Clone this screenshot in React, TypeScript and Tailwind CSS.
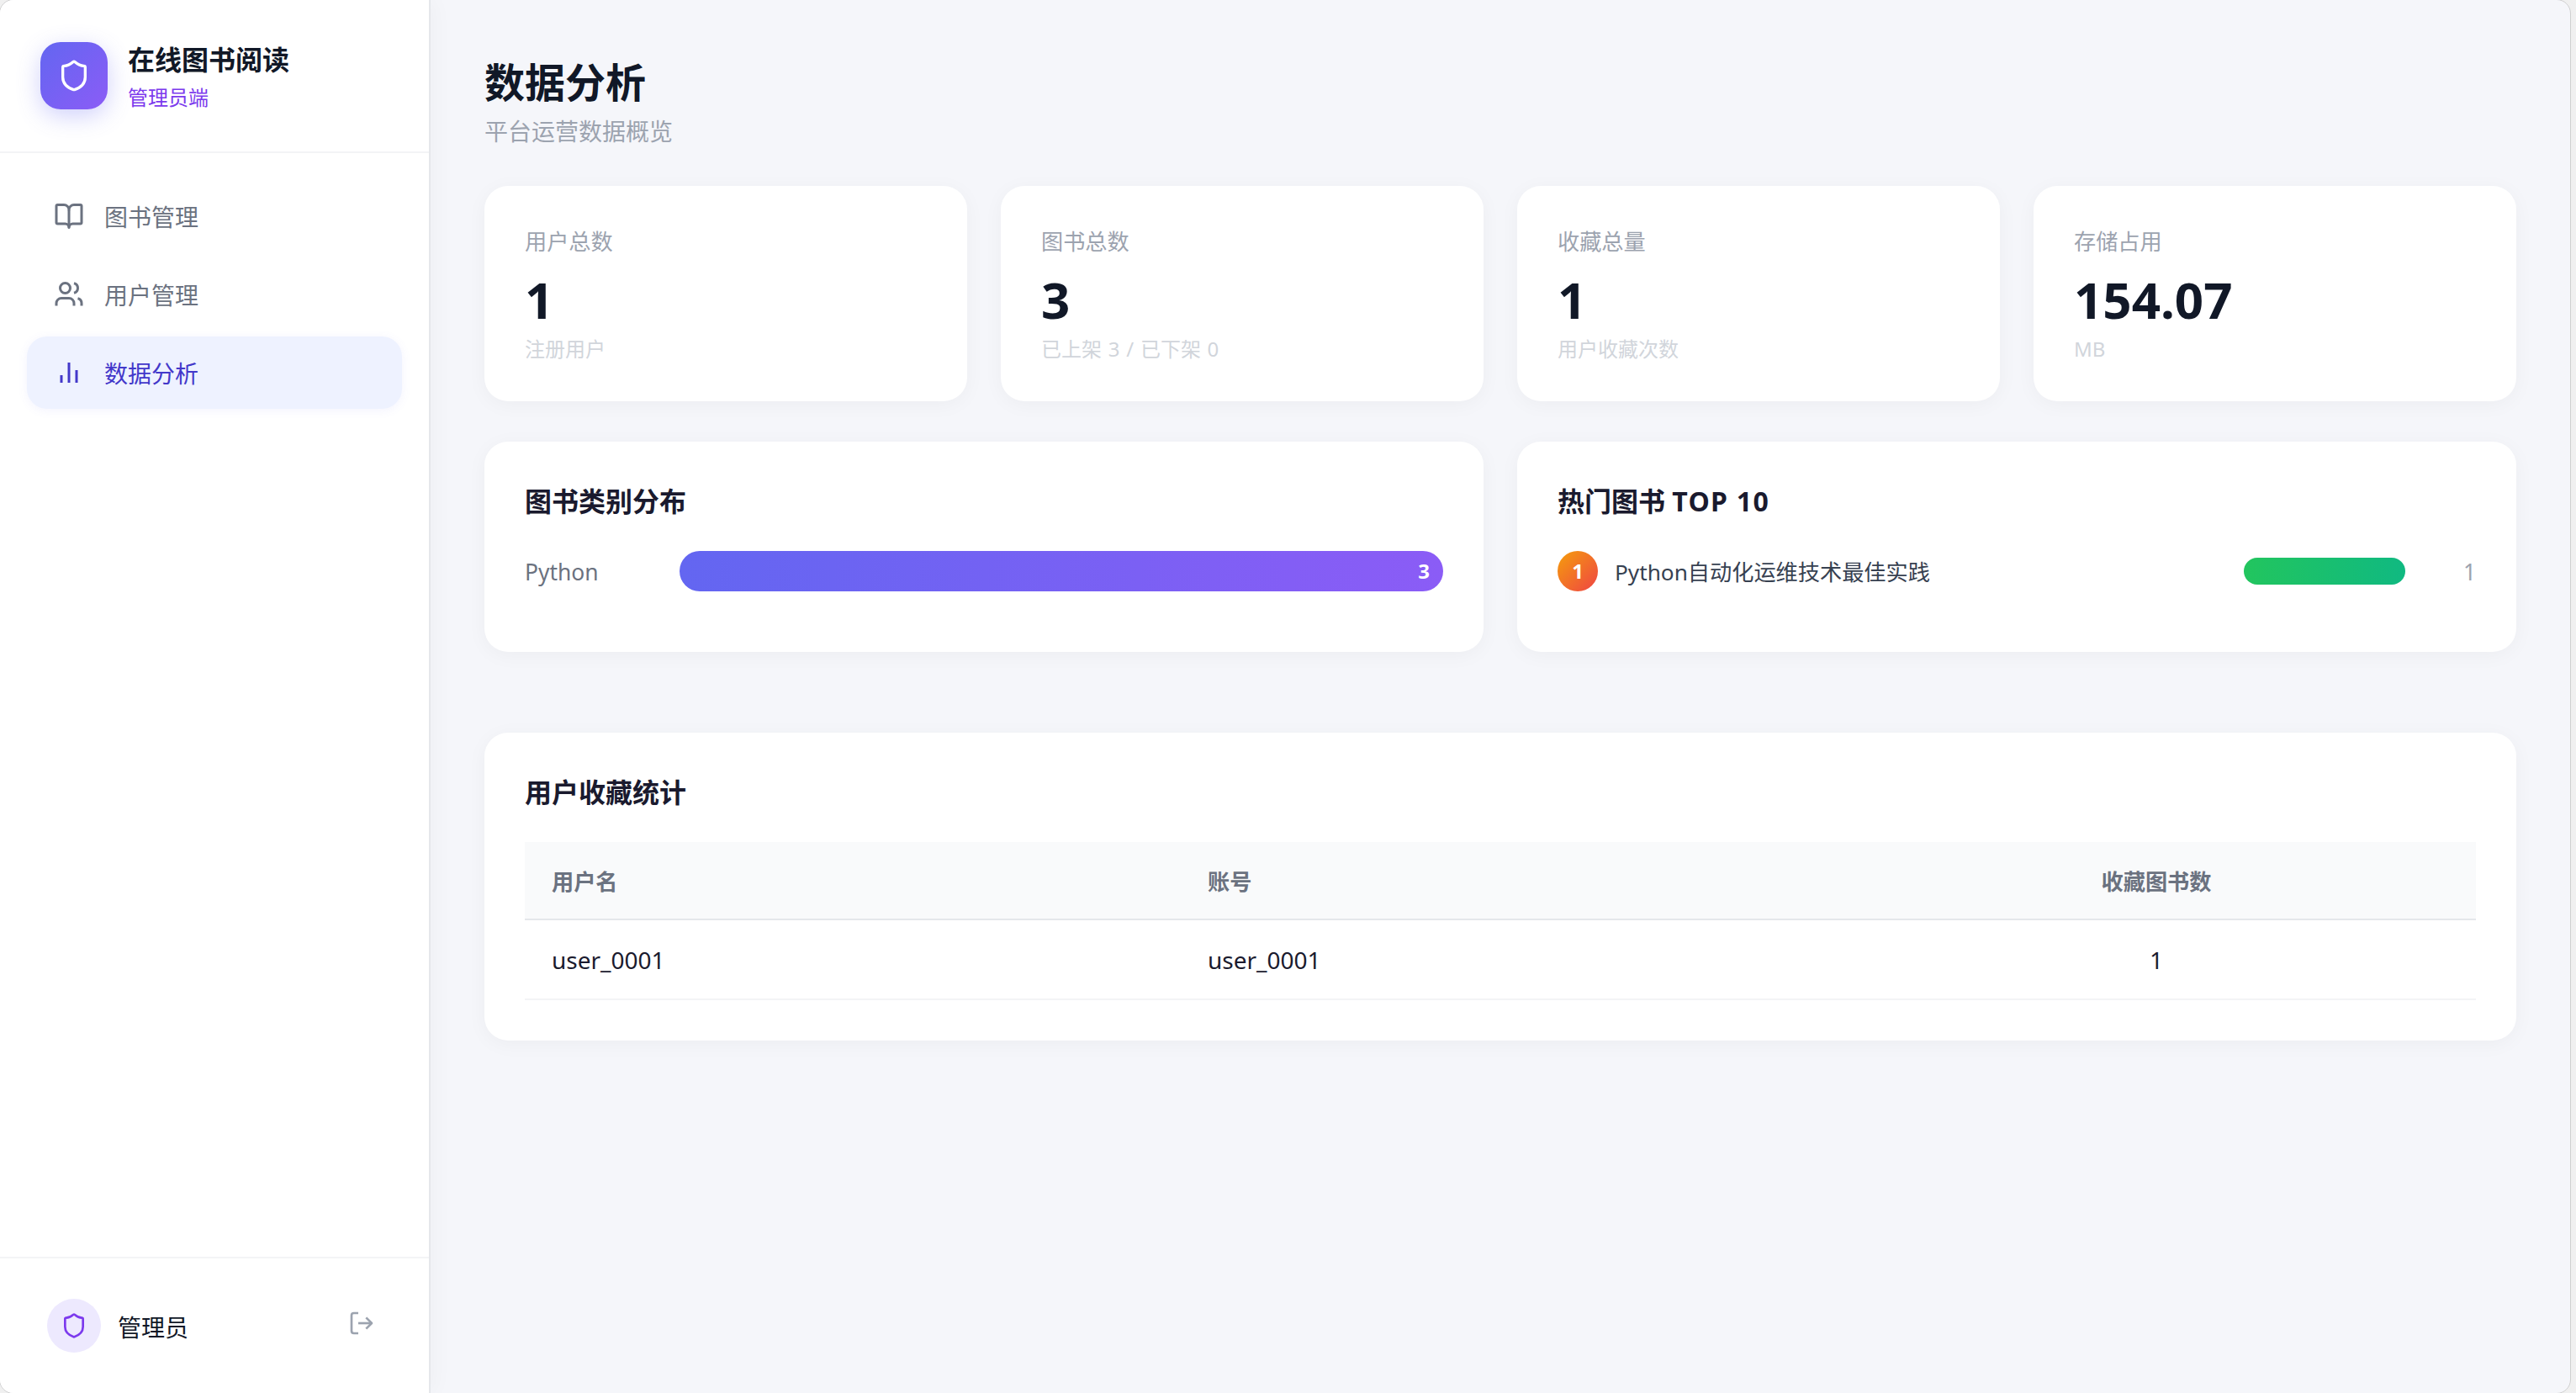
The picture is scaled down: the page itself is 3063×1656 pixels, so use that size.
import React from 'react';
import { BookOpen, LogOut, Shield, Users } from 'lucide-react';

interface Stat {
  label: string;
  value: string;
  hint: string;
}

interface NavItem {
  label: string;
  icon: React.ReactNode;
  active?: boolean;
}

function BarsIcon() {
  return (
    <svg width="36" height="36" viewBox="0 0 24 24" fill="none" stroke="currentColor" strokeWidth="2">
      <path d="M18 20V10M12 20V4M6 20v-6" />
    </svg>
  );
}

const navItems: NavItem[] = [
  { label: '图书管理', icon: <BookOpen size={36} strokeLinecap="butt" /> },
  { label: '用户管理', icon: <Users size={36} strokeLinecap="butt" /> },
  { label: '数据分析', icon: <BarsIcon />, active: true },
];

const stats: Stat[] = [
  { label: '用户总数', value: '1', hint: '注册用户' },
  { label: '图书总数', value: '3', hint: '已上架 3 / 已下架 0' },
  { label: '收藏总量', value: '1', hint: '用户收藏次数' },
  { label: '存储占用', value: '154.07', hint: 'MB' },
];

const categories = [{ name: 'Python', count: 3 }];
const topBooks = [{ title: 'Python自动化运维技术最佳实践', count: 1 }];
const userFavorites = [{ name: 'user_0001', account: 'user_0001', count: 1 }];

const cardClass = 'bg-white rounded-[28px] p-12 shadow-[0_4px_24px_rgba(0,0,0,0.04)]';

function Sidebar() {
  return (
    <aside className="relative w-[512px] shrink-0 flex flex-col bg-white border-r-2 border-[#e5e7eb] shadow-[4px_0_24px_rgba(0,0,0,0.03)]">
      <div className="flex items-center gap-6 p-12 border-b-2 border-[#f3f4f6]">
        <div className="w-20 h-20 rounded-3xl flex items-center justify-center text-white bg-[linear-gradient(135deg,#6366f1,#8b5cf6)] shadow-[0_8px_28px_rgba(99,102,241,0.3)]">
          <Shield size={40} strokeLinecap="butt" />
        </div>
        <div>
          <div className="text-[32px] leading-[46px] font-bold text-[#111827]">在线图书阅读</div>
          <div className="mt-[5px] text-2xl leading-[33px] text-[#7c3aed]">管理员端</div>
        </div>
      </div>

      <nav className="flex-1 flex flex-col gap-[7px] p-8">
        {navItems.map((item) => (
          <a
            key={item.label}
            className={
              item.active
                ? 'h-[86px] px-8 flex items-center gap-6 rounded-3xl text-[28px] text-[#4338ca] bg-[#eef2ff] shadow-[0_2px_12px_rgba(99,102,241,0.08)]'
                : 'h-[86px] px-8 flex items-center gap-6 rounded-3xl text-[28px] text-[#6b7280]'
            }
          >
            {item.icon}
            <span className="pt-0.5 leading-[37px]">{item.label}</span>
          </a>
        ))}
      </nav>

      <div className="h-[162px] px-14 flex items-center border-t-2 border-[#f3f4f6]">
        <div className="w-16 h-16 rounded-full flex items-center justify-center bg-[#ede9fe] text-[#7c3aed]">
          <Shield size={32} strokeLinecap="butt" />
        </div>
        <span className="ml-5 pt-[5px] flex-1 text-[28px] leading-[37px] text-[#111827]">管理员</span>
        <button className="px-2 pb-1.5 text-[#9ca3af]">
          <LogOut size={32} strokeLinecap="butt" />
        </button>
      </div>
    </aside>
  );
}

function StatCard({ stat }: { stat: Stat }) {
  return (
    <div className={cardClass}>
      <div className="text-[26.2px] leading-[37px] text-[#9ca3af]">{stat.label}</div>
      <div className="mt-3.5 text-[60px] leading-[72px] font-bold text-[#111827]">{stat.value}</div>
      <div className="mt-2 text-2xl leading-[29px] [word-spacing:1.5px] text-[#d1d5db]">{stat.hint}</div>
    </div>
  );
}

function CardTitle({ children }: { children: React.ReactNode }) {
  return <h3 className="mb-[37px] text-[32px] leading-[45px] font-bold text-[#1a1a2e]">{children}</h3>;
}

export default function App() {
  const maxCategory = Math.max(...categories.map((c) => c.count));

  return (
    <div className="h-screen overflow-hidden bg-[#f0f0f0] font-['Noto_Sans','Noto_Sans_CJK_SC',sans-serif]">
      {/* window frame: the left and top edges sit just outside the screen */}
      <div className="-ml-px -mt-px w-[3058px] h-[1658px] flex overflow-hidden rounded-[17px] border border-[#d0d0d0] bg-[#f5f6fa]">
        <Sidebar />

        <main className="flex-1 px-16 pt-16">
          <h1 className="text-5xl leading-[68px] font-bold text-[#111827]">数据分析</h1>
          <p className="mt-1 text-[28px] leading-10 text-[#9ca3af]">平台运营数据概览</p>

          <section className="mt-[45px] grid grid-cols-4 gap-10">
            {stats.map((stat) => (
              <StatCard key={stat.label} stat={stat} />
            ))}
          </section>

          <section className="mt-12 grid grid-cols-2 gap-10">
            <div className={cardClass}>
              <CardTitle>图书类别分布</CardTitle>
              {categories.map((c) => (
                <div key={c.name} className="mb-6 flex items-center gap-6">
                  <span className="w-40 pt-0.5 text-[26.4px] leading-9 text-[#6b7280]">{c.name}</span>
                  <div className="flex-1">
                    <div
                      className="h-12 pr-4 flex items-center justify-end rounded-full bg-[linear-gradient(90deg,#6366f1,#8b5cf6)] text-2xl font-bold text-white"
                      style={{ width: `${(c.count / maxCategory) * 100}%` }}
                    >
                      {c.count}
                    </div>
                  </div>
                </div>
              ))}
            </div>

            <div className={cardClass}>
              <CardTitle>
                热门图书 <span className="tracking-[1.3px]">TOP 10</span>
              </CardTitle>
              {topBooks.map((book, i) => (
                <div key={book.title} className="mb-6 flex items-center gap-5">
                  <span className="w-12 h-12 rounded-full flex items-center justify-center bg-[linear-gradient(135deg,#f59e0b,#ef4444)] text-2xl font-bold text-white">
                    {i + 1}
                  </span>
                  <span className="flex-1 pt-0.5 text-[26.2px] leading-9 text-[#374151]">{book.title}</span>
                  <div className="w-48 h-8 rounded-full bg-[linear-gradient(90deg,#22c55e,#10b981)]" />
                  <span className="w-16 pt-0.5 text-right text-[26.4px] leading-9 text-[#9ca3af]">{book.count}</span>
                </div>
              ))}
            </div>
          </section>

          <section className={`mt-24 ${cardClass}`}>
            <CardTitle>用户收藏统计</CardTitle>
            <div className="h-[93px] pt-[5px] grid grid-cols-[780px_780px_1fr] items-center border-b-2 border-[#e5e7eb] bg-[#f9fafb] text-[26.2px] font-bold text-[#6b7280]">
              <span className="px-8">用户名</span>
              <span className="px-8">账号</span>
              <span className="px-8 text-center">收藏图书数</span>
            </div>
            {userFavorites.map((user) => (
              <div
                key={user.account}
                className="h-[95px] grid grid-cols-[780px_780px_1fr] items-center border-b-2 border-[#f3f4f6] text-[28px] text-[#1a1a2e]"
              >
                <span className="px-8">{user.name}</span>
                <span className="px-8">{user.account}</span>
                <span className="px-8 text-center">{user.count}</span>
              </div>
            ))}
          </section>
        </main>
      </div>
    </div>
  );
}
